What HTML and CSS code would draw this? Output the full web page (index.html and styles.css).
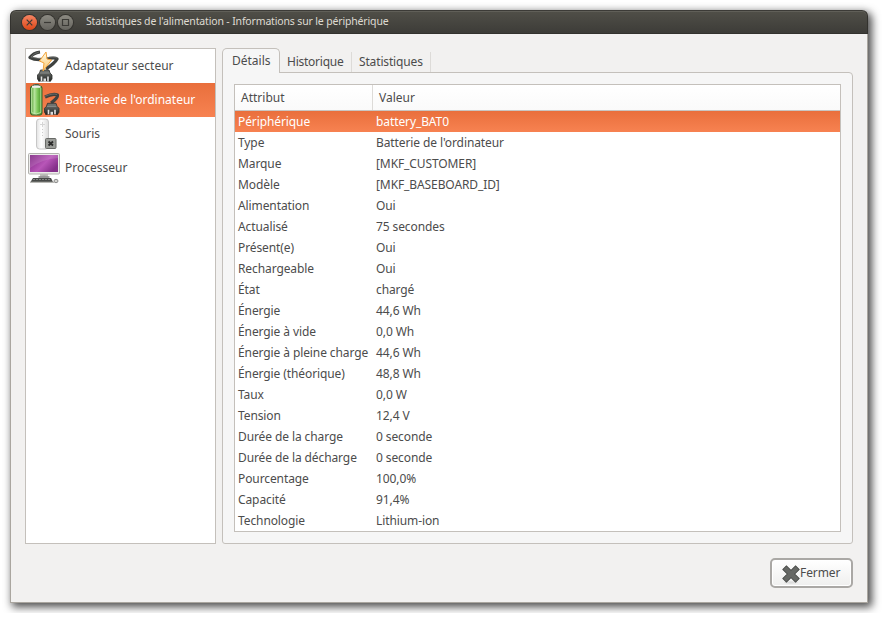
FILE: index.html
```html
<!DOCTYPE html>
<html lang="fr">
<head>
<meta charset="utf-8">
<title>Statistiques de l'alimentation</title>
<link rel="stylesheet" href="styles.css">
</head>
<body>
<svg class="defs" width="0" height="0">
  <defs>
    <linearGradient id="metal" x1="0" y1="0" x2="0" y2="1"><stop offset="0" stop-color="#777a77"/><stop offset="1" stop-color="#252725"/></linearGradient>
    <linearGradient id="green" x1="0" x2="1" y1="0" y2="0"><stop offset="0" stop-color="#4c9a2c"/><stop offset=".35" stop-color="#b5e29c"/><stop offset=".6" stop-color="#7fc95c"/><stop offset="1" stop-color="#3c8a20"/></linearGradient>
    <linearGradient id="white" x1="0" x2="1" y1="0" y2="0"><stop offset="0" stop-color="#e2e2e2"/><stop offset=".4" stop-color="#fff"/><stop offset="1" stop-color="#dcdcdc"/></linearGradient>
    <linearGradient id="bolt" x1="0" x2="0" y1="0" y2="1"><stop offset="0" stop-color="#fffbe8"/><stop offset="1" stop-color="#fbc76c"/></linearGradient>
    <linearGradient id="screen" x1="0" x2="1" y1="0" y2=".6"><stop offset="0" stop-color="#7c2280"/><stop offset=".6" stop-color="#b856b8"/><stop offset="1" stop-color="#85308a"/></linearGradient>
    <g id="plug">
      <path d="M2 9v3M13 9v3" stroke="#222" stroke-width="1.500"/>
      <path d="M3.500.5h8.500l1 3 2 2v4l-1.500 2H2l-1.500-2v-4l2-2z" fill="url(#metal)" stroke="#2c2e2c" stroke-width=".8"/>
      <path d="M3 3.500h9.500" stroke="#a2a5a2" stroke-width=".7"/>
      <path d="M4.500 7v4.500M11 7v4.500" stroke="#e4e4e4" stroke-width="1.600"/>
      <path d="M6.500 9h2.500v3H6.500z" fill="#ddd"/>
    </g>
  </defs>
</svg>
<main class="window">
  <header class="titlebar">
    <span class="control close"><svg viewBox="0 0 15 15"><path d="M4.700 4.700l5.600 5.600M10.300 4.700l-5.600 5.600"/></svg></span>
    <span class="control"><svg viewBox="0 0 15 15"><path d="M4 7.500h7"/></svg></span>
    <span class="control"><svg viewBox="0 0 15 15"><path d="M4.500 4.500h6v6h-6z"/></svg></span>
    <h1>Statistiques de l'alimentation - Informations sur le périphérique</h1>
  </header>
  <div class="content">
    <ul class="devices">
      <li>
        <svg viewBox="0 0 32 32"><path d="M12 2Q5 3 2 7.500Q8 11 18 9Q27 7 29 9Q27 13 18 19" fill="none" stroke="#3f4240" stroke-width="3.200" stroke-linejoin="round"/><path d="M11 2Q6 3 3 7Q9 9 18 8Q26 6 29 8" fill="none" stroke="#777a77" stroke-width=".7"/><use href="#plug" x="9" y="19.500"/><path d="M18 2l1 7 4.500 1-8.500 11 1-8-4.500-2z" fill="url(#bolt)" stroke="#f2a33a" stroke-linejoin="round"/></svg>
        <span>Adaptateur secteur</span>
      </li>
      <li class="selected">
        <svg viewBox="0 0 32 32"><rect x="5" y=".5" width="6.500" height="4" rx="1.500" fill="#eee" stroke="#4c5945"/><rect x="2.500" y="2" width="11.500" height="29" rx="2" fill="url(#green)" stroke="#35612a"/><path d="M4 2.800h8.500" stroke="#eee" stroke-width="2"/><path d="M3.600 4v24.500q4.500 3 9.200 0V4" fill="none" stroke="#c4eab1" stroke-width=".8"/><path d="M17 13Q25 9 29.500 11Q30 14 23 19" fill="none" stroke="#3f4240" stroke-width="3.200" stroke-linejoin="round"/><path d="M17 12.300Q25 9 29 10.500" fill="none" stroke="#777a77" stroke-width=".7"/><use href="#plug" x="16" y="18.800"/></svg>
        <span>Batterie de l'ordinateur</span>
      </li>
      <li>
        <svg viewBox="0 0 32 32"><rect x="8.500" y="1" width="12" height="30" rx="3" fill="url(#white)" stroke="#bdbdbd" stroke-width=".8"/><path d="M14.500 4v5M12 6.500h5" stroke="#d5d5d5"/><path d="M14.500 11v1M14.500 14v1M14.500 17v1" stroke="#ccc"/><rect x="17.500" y="20.500" width="10.500" height="10" rx="1" fill="#9b9d99" stroke="#686a67"/><path d="M20.500 23.500l4.500 4M25 23.500l-4.500 4" stroke="#2b2b2b" stroke-width="1.800"/></svg>
        <span>Souris</span>
      </li>
      <li>
        <svg viewBox="0 0 32 32"><path d="M12 21h8v4h-8z" fill="#c4c4c0"/><rect x=".5" y="1.500" width="31" height="20.500" rx="1" fill="#ececea" stroke="#b1b1ad"/><rect x="2" y="3" width="28" height="17" fill="url(#screen)"/><path d="M2 3h28v3Q14 7 2 16z" fill="#fff" opacity=".12"/><ellipse cx="16" cy="25" rx="6" ry="1.500" fill="#999"/><path d="M5 26h18l2 4H2.500z" fill="#484a48"/><path d="M5 27.500h18" stroke="#858785" stroke-dasharray="2 1"/><path d="M2 30.300h24" stroke="#b0b0ac" stroke-width="1.200"/><ellipse cx="28" cy="29" rx="2" ry="1.700" fill="#d4d4d0" stroke="#777" stroke-width=".8"/></svg>
        <span>Processeur</span>
      </li>
    </ul>
    <section class="notebook">
      <nav class="tabs"><span class="tab active">Détails</span><span class="tab history">Historique</span><span class="tab stats">Statistiques</span></nav>
      <div class="page">
        <table>
          <thead><tr><th>Attribut</th><th>Valeur</th></tr></thead>
          <tbody>
            <tr class="selected"><td>Périphérique</td><td>battery_BAT0</td></tr>
            <tr><td>Type</td><td>Batterie de l'ordinateur</td></tr>
            <tr><td>Marque</td><td>[MKF_CUSTOMER]</td></tr>
            <tr><td>Modèle</td><td>[MKF_BASEBOARD_ID]</td></tr>
            <tr><td>Alimentation</td><td>Oui</td></tr>
            <tr><td>Actualisé</td><td>75 secondes</td></tr>
            <tr><td>Présent(e)</td><td>Oui</td></tr>
            <tr><td>Rechargeable</td><td>Oui</td></tr>
            <tr><td>État</td><td>chargé</td></tr>
            <tr><td>Énergie</td><td>44,6 Wh</td></tr>
            <tr><td>Énergie à vide</td><td>0,0 Wh</td></tr>
            <tr><td>Énergie à pleine charge</td><td>44,6 Wh</td></tr>
            <tr><td>Énergie (théorique)</td><td>48,8 Wh</td></tr>
            <tr><td>Taux</td><td>0,0 W</td></tr>
            <tr><td>Tension</td><td>12,4 V</td></tr>
            <tr><td>Durée de la charge</td><td>0 seconde</td></tr>
            <tr><td>Durée de la décharge</td><td>0 seconde</td></tr>
            <tr><td>Pourcentage</td><td>100,0%</td></tr>
            <tr><td>Capacité</td><td>91,4%</td></tr>
            <tr><td>Technologie</td><td>Lithium-ion</td></tr>
          </tbody>
        </table>
      </div>
    </section>
  </div>
  <footer>
    <button type="button"><svg viewBox="0 0 20 20"><ellipse cx="10" cy="18.500" rx="7" ry="1.200" fill="#ddd"/><path d="M3.300 3.300l13.400 13.400M16.700 3.300L3.300 16.700" stroke="#3f413f" stroke-width="6"/><path d="M3.800 3.800l12.400 12.400M16.200 3.800L3.800 16.200" stroke="#666865" stroke-width="4.500"/></svg><span>Fermer</span></button>
  </footer>
</main>
</body>
</html>
```
FILE: styles.css
```css
* { box-sizing: border-box; }
body {
  margin: 0;
  padding: 10px;
  background: #fff;
  color: #4c4c4c;
  font: 12px/20px "Noto Sans", "Open Sans", sans-serif;
}
.defs { position: absolute; }
.window {
  display: flex;
  flex-direction: column;
  width: 858px;
  height: 593px;
  border: 1px solid #aaa69f;
  border-top: 0;
  border-radius: 6px 6px 0 0;
  background: #f2f1f0;
  box-shadow: 3px 3px 9px 1px rgba(0, 0, 0, .7);
}
.titlebar {
  display: flex;
  align-items: center;
  gap: 3px;
  height: 24px;
  margin: 0 -1px;
  padding-left: 11px;
  border: 1px solid #33322e;
  border-top-color: #3c3b37;
  border-radius: 6px 6px 0 0;
  background: linear-gradient(#504f48, #3d3c38);
  box-shadow: inset 0 1px #605f58;
}
.titlebar h1 {
  margin: -2px 0 0 10px;
  color: #dfdbd2;
  font-size: 10.5px;
  font-weight: 400;
  letter-spacing: -.155px;
}
.control {
  width: 15px;
  height: 15px;
  border-radius: 50%;
  background: linear-gradient(#8c8a82, #65645e);
  box-shadow: 0 0 0 1px #34332f;
}
.control.close { background: linear-gradient(#f58462, #dc4718); }
.control svg {
  display: block;
  fill: none;
  stroke: #3b3a36;
  stroke-width: 1.2;
}
.content {
  display: flex;
  gap: 6px;
  height: 496px;
  margin: 14px 14px 0;
}
.devices {
  width: 191px;
  margin: 0;
  padding: 0;
  border: 1px solid #c4c0bb;
  background: #fff;
  list-style: none;
}
.devices li {
  display: flex;
  align-items: center;
  gap: 5px;
  height: 34px;
  padding-left: 2px;
}
.devices li svg { width: 32px; height: 32px; }
.devices .selected, tbody .selected {
  background: linear-gradient(#e96f3c, #f78251);
  color: #fff;
}
.notebook {
  display: flex;
  flex-direction: column;
  width: 631px;
}
.tabs {
  display: flex;
  align-items: flex-start;
  height: 24px;
}
.tab {
  height: 20px;
  margin-top: 4px;
  border-right: 1px solid #dddbd8;
  letter-spacing: -.15px;
}
.tab.active {
  z-index: 1;
  width: 58px;
  height: 25px;
  margin-top: 0;
  padding: 2px 0 0 9px;
  border: 1px solid #c4c0bb;
  border-bottom: 0;
  border-radius: 5px 5px 0 0;
  background: #f6f6f6;
  letter-spacing: 0;
}
.tab.history { width: 72px; padding-left: 7px; letter-spacing: -.25px; }
.tab.stats { width: 79px; padding-left: 7px; }
.page {
  flex: 1;
  padding: 11px;
  border: 1px solid #c4c0bb;
  border-radius: 0 4px 3px 3px;
  background: #f6f6f6;
}
table {
  display: block;
  height: 448px;
  border: 1px solid #c4c0bb;
  background: #fff;
}
thead, tbody { display: block; }
tr {
  display: grid;
  grid-template-columns: 138px 1fr;
  height: 21px;
}
thead tr {
  height: 26px;
  border-bottom: 1px solid #c9c6c2;
  background: linear-gradient(#fff, #fafafa);
}
th {
  padding: 3px 0 0 6px;
  border-right: 1px solid #dddbd8;
  font-weight: 400;
  text-align: left;
}
th:last-child { border: 0; }
td {
  padding: 1px 0 0 3px;
  letter-spacing: -.1px;
  white-space: nowrap;
}
footer {
  display: flex;
  justify-content: flex-end;
  padding: 14px 14px 0;
}
button {
  display: flex;
  align-items: center;
  width: 83px;
  height: 30px;
  padding: 0 0 1px 9px;
  border: 2px solid #aaa8a5;
  border-radius: 5px;
  background: linear-gradient(#fff, #efefee);
  box-shadow: inset 0 0 0 1px #fff;
  color: inherit;
  font: inherit;
  letter-spacing: -.1px;
}
button svg { width: 20px; height: 20px; margin: 2px -1px 0 0; }
```
